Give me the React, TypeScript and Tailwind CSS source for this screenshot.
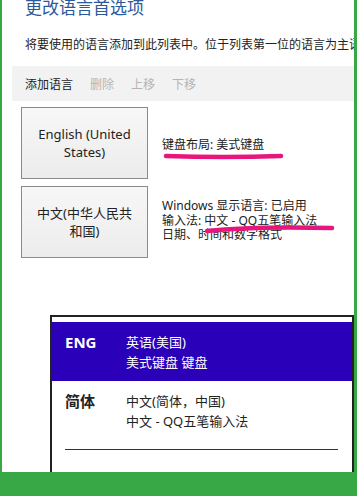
import React from "react";

const font = { fontFamily: '"Noto Sans", "Noto Sans CJK SC", sans-serif' };

const Mark = ({ d, w, h }: { d: string; w: number; h: number }) => (
  <svg width={w} height={h} className="absolute pointer-events-none" viewBox={`0 0 ${w} ${h}`}>
    <path d={d} stroke="#e8167c" strokeWidth={4.5} strokeLinecap="round" fill="none" />
  </svg>
);

const LangBox = ({ children }: { children: React.ReactNode }) => (
  <div className="w-[127px] h-[72px] shrink-0 border border-[#8a8a8a] bg-gradient-to-b from-[#f7f7f7] to-[#ececec] flex items-center justify-center text-center text-[13px] leading-[18px] text-[#222] px-3">
    {children}
  </div>
);

export default function App() {
  return (
    <div className="w-[357px] h-[496px] bg-[#38a847] flex flex-col overflow-hidden" style={font}>
      <div className="flex-1 bg-white ml-[2px] mr-[3px] overflow-hidden flex flex-col">
        <h1 className="text-[17px] leading-[20px] text-[#2a5a9c] pl-[23px] mt-[-2px] whitespace-nowrap">
          更改语言首选项
        </h1>
        <p className="text-[12px] leading-[16px] text-[#222] pl-[23px] mt-[19px] whitespace-nowrap">
          将要使用的语言添加到此列表中。位于列表第一位的语言为主语言。
        </p>
        <div className="mt-[13px] ml-[10px] h-[35px] bg-[#f2f2f2] flex items-center gap-[17px] pl-[13px] text-[12px] text-[#b4b4b4] pt-[2px]">
          <span className="text-[#222]">添加语言</span>
          <span>删除</span>
          <span>上移</span>
          <span>下移</span>
        </div>

        <div className="mt-[6px] ml-[19px] flex flex-col gap-[7px]">
          <div className="flex items-center">
            <LangBox>
              English (United
              <br />
              States)
            </LangBox>
            <div className="relative ml-[14px] text-[12px] leading-[15px] text-[#222] mt-[2px]">
              键盘布局: 美式键盘
              <div className="absolute left-[1px] top-[14px]">
                <Mark w={124} h={10} d="M3 5 Q60 7 118 5" />
              </div>
            </div>
          </div>
          <div className="flex items-center">
            <LangBox>
              中文(中华人民共
              <br />
              和国)
            </LangBox>
            <div className="relative ml-[14px] text-[12px] leading-[14.5px] text-[#222] mt-[-2px]">
              <div>Windows 显示语言: 已启用</div>
              <div>输入法: 中文 - QQ五笔输入法</div>
              <div>日期、时间和数字格式</div>
              <div className="absolute left-[42px] top-[23px]">
                <Mark w={132} h={14} d="M3 9 Q50 4 128 6" />
              </div>
            </div>
          </div>
        </div>

        <div className="mt-[57px] ml-[48px] flex-1 border-l-2 border-t-2 border-r-2 border-[#222] pt-[5px]">
          <div className="bg-[#2a00b8] h-[59px] flex pl-[13px] pt-[10px] text-white">
            <div className="w-[61px] text-[15px] leading-[20px] font-bold">ENG</div>
            <div className="text-[13px] leading-[20px]">
              <div>英语(美国)</div>
              <div>美式键盘 键盘</div>
            </div>
          </div>
          <div className="flex pl-[13px] pt-[10px] text-[#222]">
            <div className="w-[61px] text-[15px] leading-[20px] font-bold">简体</div>
            <div className="text-[13px] leading-[20px]">
              <div>中文(简体，中国)</div>
              <div>中文 - QQ五笔输入法</div>
            </div>
          </div>
          <div className="mt-[18px] ml-[13px] mr-[14px] h-px bg-[#333]" />
        </div>
      </div>
      <div className="h-[24px] shrink-0" />
    </div>
  );
}
